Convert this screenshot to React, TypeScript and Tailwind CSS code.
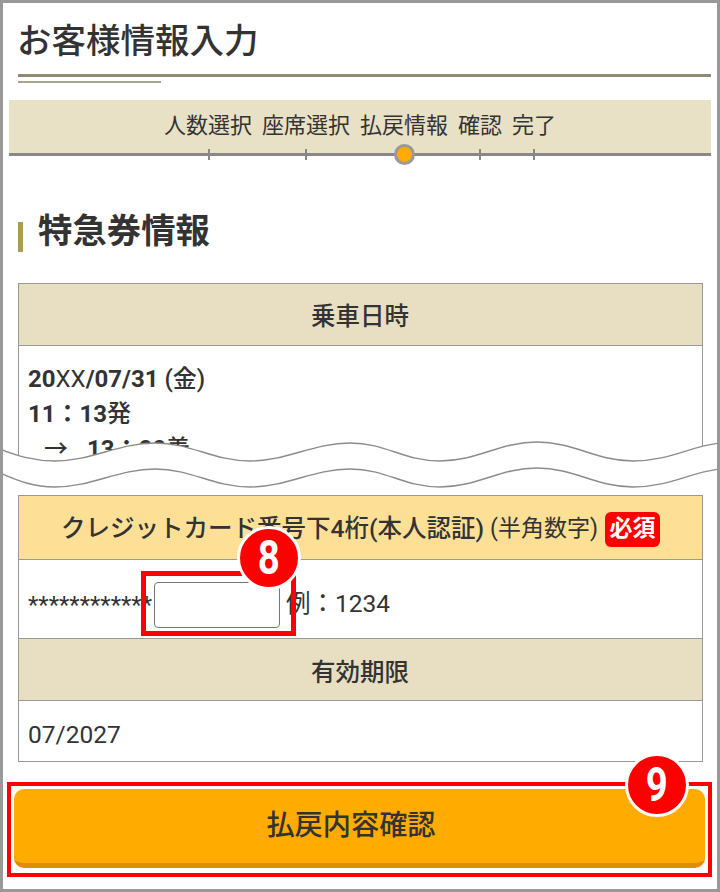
const font = "font-['Roboto','Noto_Sans_CJK_JP',sans-serif]"

const topWave =
  "M0 449 C18 456 34 461 55 461 C92 461 118 443 155 443 C192 443 213 461 250 461 C287 461 313 443 350 443 C387 443 403 461 440 461 C477 461 500 442 537 442 C574 442 596 461 633 461 C670 461 690 446 720 443"
const bottomWave =
  "M0 473 C18 481 34 487 55 487 C92 487 118 469 155 469 C192 469 213 487 250 487 C287 487 313 469 350 469 C387 469 403 487 440 487 C477 487 500 468 537 468 C574 468 596 487 633 487 C670 487 690 472 720 469"
const bottomBack =
  "L720 469 C690 472 670 487 633 487 C596 487 574 468 537 468 C500 468 477 487 440 487 C403 487 387 469 350 469 C313 469 287 487 250 487 C213 487 192 469 155 469 C118 469 92 487 55 487 C34 487 18 481 0 473 Z"

function Badge({ n, className }: { n: string; className: string }) {
  return (
    <div
      className={`absolute z-20 flex h-[64px] w-[64px] items-center justify-center rounded-full border-[3px] border-white bg-[#ff0000] text-[48px] font-bold text-white ${className}`}
    >
      <span className="scale-x-80">{n}</span>
    </div>
  )
}

function Wave() {
  return (
    <svg className="absolute left-[-3px] top-[-3px] z-10" width="720" height="500" viewBox="0 0 720 500" fill="none">
      <path d={`${topWave} ${bottomBack}`} fill="#fff" />
      <path d={topWave} stroke="#8c8c8c" strokeWidth="1.4" />
      <path d={bottomWave} stroke="#8c8c8c" strokeWidth="1.4" />
    </svg>
  )
}

function Tick({ className }: { className: string }) {
  return <span className={`absolute top-[-4px] h-[11px] w-[2px] bg-[#888] ${className}`} />
}

export default function App() {
  return (
    <div className={`${font} relative h-[892px] w-[720px] overflow-hidden border-[3px] border-[#999] bg-white text-[24.5px] text-[#333]`}>
      <Wave />

      <div className="px-[15px] pt-[15px]">
        <h1 className="ml-[-1px] h-[44px] pt-[1px] text-[34.5px] leading-[44px] font-medium">お客様情報入力</h1>
        <div className="mt-[12px] h-[3px] w-[693px] bg-[#8f8a75]" />
        <div className="mt-[4px] h-[2px] w-[143px] bg-[#a8a48f]" />
      </div>

      <div className="mt-[17px] ml-[6px] w-[702px]">
        <div className="flex h-[53px] items-center justify-center gap-[10px] bg-[#e9e1c6] pb-[3px] text-[22px]">
          <span>人数選択</span>
          <span>座席選択</span>
          <span>払戻情報</span>
          <span>確認</span>
          <span>完了</span>
        </div>
        <div className="relative h-[3px] bg-[#888]">
          <Tick className="left-[199px]" />
          <Tick className="left-[296px]" />
          <Tick className="left-[470px]" />
          <Tick className="left-[524px]" />
          <span className="absolute left-[385px] top-[-9px] h-[21px] w-[21px] rounded-full border-[3px] border-[#999] bg-[#ffab00]" />
        </div>
      </div>

      <div className="mt-[56px] ml-[15px] flex h-[44px] items-start">
        <span className="mt-[10px] h-[30px] w-[5px] bg-[#ac9c50]" />
        <h2 className="ml-[15px] mt-[-3px] text-[34.4px] leading-[44px] font-bold">特急券情報</h2>
      </div>

      <div className="mt-[27px] ml-[15px] h-[190px] w-[685px] overflow-hidden border-x border-t border-[#999]">
        <div className="flex h-[62px] items-center justify-center border-b border-[#999] bg-[#e8dfc2] pt-[5px] pr-[1px] font-medium">乗車日時</div>
        <div className="px-[9px] pt-[16px] text-[24px] leading-[35px] font-medium">
          <div><b>20</b><span className="font-normal">XX</span><b>/07/31</b> (金)</div>
          <div><b>11：13</b>発</div>
          <div className="pl-[16px]">→ <b className="ml-[13px]">13：00</b>着</div>
        </div>
      </div>

      <div className="mt-[22px] ml-[15px] w-[685px] border border-[#999]">
        <div className="flex h-[64px] items-center justify-center border-b border-[#999] bg-[#fde096] pt-[3px]">
          <span className="font-medium">クレジットカード番号下4桁(本人認証)</span>
          <span className="ml-[6px] text-[23px]">(半角数字)</span>
          <span className="ml-[7px] flex h-[35px] w-[55px] items-center justify-center rounded-[6px] bg-[#ff0000] text-[23px] font-bold text-white">必須</span>
        </div>
        <div className="flex h-[79px] items-center border-b border-[#999] pl-[9px] pt-[12px]">
          <span className="text-[24px]">************</span>
          <input aria-label="card" className="ml-[2px] h-[46px] w-[126px] rounded-[4px] border border-[#777] bg-white" />
          <span className="ml-[6px] mt-[-2px]">例：1234</span>
        </div>
        <div className="flex h-[62px] items-center justify-center border-b border-[#999] bg-[#e8dfc2] pt-[7px] pr-[1px] font-medium">有効期限</div>
        <div className="flex h-[60px] items-center pl-[9px] pt-[9px]">07/2027</div>
      </div>

      <div className="mt-[20px] ml-[4px] h-[95px] w-[705px] border-[4px] border-[#ff0000] p-[3px]">
        <button className="flex h-[79px] w-full items-center justify-center rounded-[10px] border-b-[5px] border-[#d98f00] bg-[#ffab00] pr-[17px] text-[28.2px] font-medium">
          払戻内容確認
        </button>
      </div>

      <div className="absolute left-[138px] top-[568px] z-10 h-[65px] w-[155px] border-[5px] border-[#ff0000]" />
      <Badge n="8" className="left-[234px] top-[523px]" />
      <Badge n="9" className="left-[622px] top-[750px]" />
    </div>
  )
}
